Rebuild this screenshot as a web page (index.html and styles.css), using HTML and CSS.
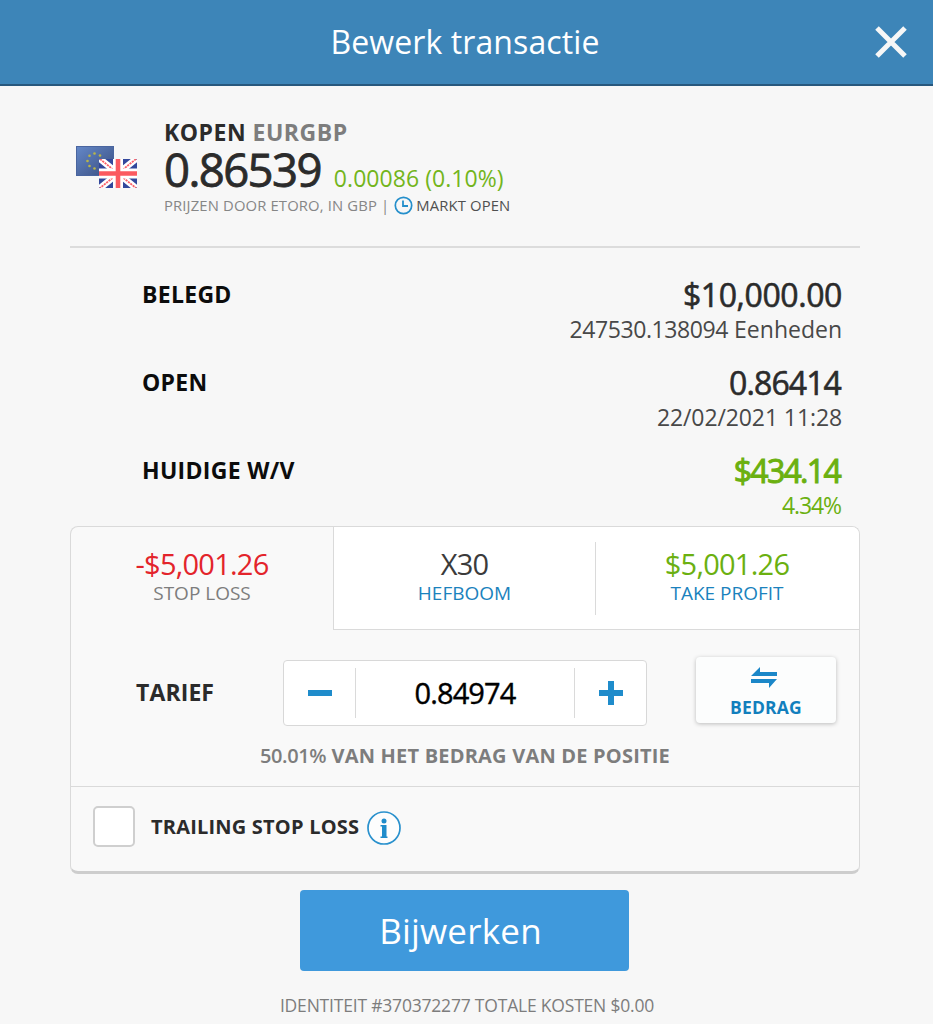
FILE: index.html
```html
<!DOCTYPE html>
<html lang="nl">
<head>
    <meta charset="UTF-8">
    <meta name="viewport" content="width=device-width, initial-scale=1.0">
    <title>Bewerk transactie</title>
    <link rel="stylesheet" href="styles.css">
</head>
<body>
    <header class="header">
        <h1 class="header-title">Bewerk transactie</h1>
        <button class="close-btn" aria-label="Sluiten">
            <svg width="34" height="34" viewBox="0 0 34 34"><path d="M3 3L31 31M31 3L3 31" stroke="#f7f7f7" stroke-width="5"/></svg>
        </button>
    </header>

    <main class="content">
        <section class="quote">
            <svg class="flags" width="62" height="43" viewBox="0 0 62 43">
                <defs>
                    <linearGradient id="eu" x1="0" y1="0" x2="1" y2="1">
                        <stop offset="0" stop-color="#6488c8"/>
                        <stop offset="1" stop-color="#3a4e80"/>
                    </linearGradient>
                </defs>
                <rect x="0.5" y="0.5" width="37" height="29" fill="url(#eu)" stroke="#4a659f"/>
                <g fill="#b9b548">
                    <circle cx="18.5" cy="7.5" r="1.3"/><circle cx="24" cy="9.5" r="1.3"/><circle cx="13.5" cy="9.7" r="1.3"/>
                    <circle cx="11.5" cy="15" r="1.3"/><circle cx="13.5" cy="20" r="1.3"/><circle cx="18.5" cy="22.5" r="1.3"/>
                </g>
                <!-- Union Jack -->
                <svg x="23" y="13" width="38" height="29" viewBox="0 0 38 29">
                    <rect width="38" height="29" fill="#33489c"/>
                    <path d="M1 0L37 29M37 0L1 29" stroke="#fff" stroke-width="6.5"/>
                    <path d="M1 0L37 29M37 0L1 29" stroke="#fb6068" stroke-width="1.8" stroke-dasharray="2.2 0.8"/>
                    <path d="M19 0V29M0 14.5H38" stroke="#fff" stroke-width="10"/>
                    <path d="M19 0V29M0 14.5H38" stroke="#fb5a60" stroke-width="4.6"/>
                </svg>
            </svg>
            <div class="quote-info">
                <div class="quote-name">KOPEN <span>EURGBP</span></div>
                <div class="quote-price">
                    <span class="price">0.86539</span>
                    <span class="change">0.00086 (0.10%)</span>
                </div>
                <div class="quote-note">
                    <span>PRIJZEN DOOR ETORO, IN GBP |</span>
                    <svg width="19" height="19" viewBox="0 0 19 19" fill="none" stroke="#258fcb"><circle cx="9.5" cy="9.5" r="8.2" stroke-width="1.7"/><path d="M9 4.5V10H14" stroke-width="1.8"/></svg>
                    <span class="market">MARKT OPEN</span>
                </div>
            </div>
        </section>

        <section class="details">
            <div class="row">
                <div class="row-label">BELEGD</div>
                <div class="row-data">
                    <div class="row-value">$10,000.00</div>
                    <div class="row-sub"><span class="units">247530.138094</span> Eenheden</div>
                </div>
            </div>
            <div class="row">
                <div class="row-label">OPEN</div>
                <div class="row-data">
                    <div class="row-value rate">0.86414</div>
                    <div class="row-sub date">22/02/2021 11:28</div>
                </div>
            </div>
            <div class="row">
                <div class="row-label">HUIDIGE W/V</div>
                <div class="row-data profit">
                    <div class="row-value">$434.14</div>
                    <div class="row-sub">4.34%</div>
                </div>
            </div>
        </section>

        <section class="card">
            <div class="tabs">
                <div class="tab active">
                    <div class="tab-value red">-$5,001.26</div>
                    <div class="tab-name">STOP LOSS</div>
                </div>
                <div class="tab">
                    <div class="tab-value">X30</div>
                    <div class="tab-name">HEFBOOM</div>
                </div>
                <div class="tab">
                    <div class="tab-value green">$5,001.26</div>
                    <div class="tab-name">TAKE PROFIT</div>
                </div>
            </div>
            <div class="rate-row">
                <div class="rate-label">TARIEF</div>
                <div class="stepper">
                    <button class="step-btn" aria-label="Min"><svg width="24" height="24" viewBox="0 0 24 24"><path d="M0 12H24" stroke="#1f8ccb" stroke-width="6"/></svg></button>
                    <div class="step-value">0.84974</div>
                    <button class="step-btn" aria-label="Plus"><svg width="24" height="24" viewBox="0 0 24 24"><path d="M0 12H24M12 0V24" stroke="#1f8ccb" stroke-width="6"/></svg></button>
                </div>
                <button class="amount-btn">
                    <svg width="26" height="21" viewBox="0 0 26 21" fill="#1b87c8"><path d="M0 9L9 0V5H26V9Z"/><path d="M26 12L18 21V16H0V12Z"/></svg>
                    <span>BEDRAG</span>
                </button>
            </div>
            <div class="rate-note"><span>50.01%</span> VAN HET BEDRAG VAN DE POSITIE</div>
            <div class="trailing">
                <div class="checkbox"></div>
                <div class="trailing-label">TRAILING STOP LOSS</div>
                <svg width="34" height="34" viewBox="0 0 34 34"><circle cx="17" cy="17" r="16" fill="#fdfdfd" stroke="#2a91cd" stroke-width="1.7"/><circle cx="17" cy="10" r="2.5" fill="#1f8ccb"/><path d="M13.5 14H19.5V25.5H20.5V27H13.5V25.5H15V15.5H13.5Z" fill="#1f8ccb"/></svg>
            </div>
        </section>

        <button class="submit-btn">Bijwerken</button>
        <footer class="footer">IDENTITEIT #370372277 TOTALE KOSTEN $0.00</footer>
    </main>
</body>
</html>
```
FILE: styles.css
```css
:root {
    --blue: #1b82bd;
    --green: #6bb010;
    --dark: #2b2b2b;
    --grey: #7d7d7d;
    --line: #dadada;
}

* {
    box-sizing: border-box;
}

body {
    margin: 0;
    background: #f7f7f7;
    font-family: "Open Sans", "Noto Sans", sans-serif;
    color: var(--dark);
    overflow: hidden;
}

button {
    margin: 0;
    padding: 0;
    border: none;
    background: none;
    font-family: inherit;
    cursor: pointer;
}

svg {
    display: block;
    flex-shrink: 0;
}

.header {
    display: grid;
    grid-template-columns: 60px 1fr 60px;
    align-items: center;
    height: 86px;
    padding: 0 25px 1px 22px;
    background: #3d85b8;
    border-bottom: 2px solid #28587d;
}

.header-title {
    grid-column: 2;
    margin: 0;
    font-size: 32px;
    font-weight: 400;
    line-height: 44px;
    letter-spacing: 0.1px;
    text-align: center;
    color: #fff;
}

.close-btn {
    justify-self: end;
}

.content {
    width: 790px;
    margin: 0 auto 0 70px;
}

/* Koers */
.quote {
    display: flex;
    height: 162px;
    padding: 31px 0 0 6px;
    border-bottom: 2px solid #dcdcdc;
}

.flags {
    margin: 29px 26px 0 0;
}

.quote-name {
    font-size: 23px;
    font-weight: 700;
    line-height: 30px;
    letter-spacing: 0.5px;
}

.quote-name span {
    color: var(--grey);
}

.quote-price {
    display: flex;
    align-items: baseline;
    gap: 13px;
    height: 46px;
    line-height: 44px;
}

.price {
    font-size: 45.5px;
    letter-spacing: -1.6px;
    -webkit-text-stroke: 0.8px var(--dark);
}

.change {
    font-size: 23px;
    letter-spacing: 0.05px;
    color: #73b51c;
}

.quote-note {
    display: flex;
    align-items: center;
    height: 22px;
    margin-top: 1px;
    gap: 5px;
    font-size: 14.8px;
    letter-spacing: 0.15px;
    color: #868686;
}

.market {
    margin-left: -2px;
    color: #505050;
}

/* Gegevens van de positie */
.details {
    display: flex;
    flex-direction: column;
    gap: 20px;
    padding: 28px 18px 6px 70px;
}

.row {
    display: flex;
    justify-content: space-between;
}

.row-label {
    padding-left: 2px;
    font-size: 23px;
    font-weight: 700;
    line-height: 36px;
    letter-spacing: 0.3px;
    color: #0c0c0c;
}

.row-data {
    text-align: right;
}

.row-value {
    font-size: 32px;
    line-height: 37px;
    letter-spacing: -0.4px;
    -webkit-text-stroke: 0.6px currentColor;
}

.row-value.rate {
    padding-right: 1px;
    letter-spacing: -0.9px;
}

.row-sub {
    margin-top: 1px;
    font-size: 23px;
    line-height: 30px;
    color: #484848;
}

.date {
    letter-spacing: -0.1px;
}

.units {
    letter-spacing: -0.4px;
}

.profit .row-value {
    padding-right: 2px;
    letter-spacing: -1.7px;
    -webkit-text-stroke-width: 1px;
    color: var(--green);
}

.profit .row-sub {
    padding-right: 1px;
    letter-spacing: -1.1px;
    color: var(--green);
}

/* Kaart met tabs */
.card {
    height: 348px;
    background: #f9f9f9;
    border: 1px solid var(--line);
    border-bottom: 3px solid #cdcdcd;
    border-radius: 8px;
    overflow: hidden;
}

.tabs {
    display: grid;
    grid-template-columns: 262px 262px 264px;
    height: 103px;
}

.tab {
    display: flex;
    flex-direction: column;
    align-items: center;
    padding-top: 18px;
    background: #fff;
    border-bottom: 1px solid var(--line);
    color: #3b3b3b;
}

.tab + .tab {
    border-left: 1px solid var(--line);
}

.tab + .tab + .tab {
    border-left: none;
    background: linear-gradient(var(--line), var(--line)) 0 15px / 1px 73px no-repeat #fff;
}

.tab.active {
    background: none;
    border-bottom: none;
}

.tab-value {
    font-size: 29px;
    line-height: 37px;
    letter-spacing: -0.75px;
}

.red {
    color: #e3242b;
}

.green {
    color: var(--green);
}

.tab-name {
    font-size: 19px;
    line-height: 22px;
    color: var(--blue);
}

.active .tab-name {
    color: var(--grey);
}

.rate-row {
    display: flex;
    align-items: flex-start;
    padding: 27px 23px 0 65px;
}

.rate-label {
    width: 147px;
    padding-top: 17px;
    font-size: 23px;
    font-weight: 700;
    line-height: 36px;
    letter-spacing: 0.1px;
}

.stepper {
    display: flex;
    align-items: center;
    width: 364px;
    height: 66px;
    margin-top: 3px;
    background: #fff;
    border: 1px solid #d8d8d8;
    border-radius: 4px;
}

.step-btn {
    display: flex;
    align-items: center;
    justify-content: center;
    width: 71px;
    height: 50px;
}

.step-value {
    flex: 1;
    border: solid var(--line);
    border-width: 0 1px;
    font-size: 29px;
    line-height: 50px;
    letter-spacing: -0.9px;
    text-align: center;
    color: #000;
    -webkit-text-stroke: 0.4px #000;
}

.amount-btn {
    display: flex;
    flex-direction: column;
    align-items: center;
    width: 140px;
    height: 66px;
    margin-left: auto;
    padding-top: 10px;
    background: #fcfdfd;
    border-radius: 4px;
    box-shadow: 0 1px 4px rgba(0, 0, 0, 0.25);
}

.amount-btn svg {
    margin-right: 4px;
}

.amount-btn span {
    margin-top: 6px;
    font-size: 17.5px;
    font-weight: 700;
    line-height: 26px;
    letter-spacing: 0.2px;
    color: #127fbd;
}

.rate-note {
    height: 61px;
    padding-top: 16px;
    font-size: 20px;
    font-weight: 700;
    line-height: 28px;
    letter-spacing: 0.2px;
    text-align: center;
    color: var(--grey);
    border-bottom: 1px solid var(--line);
}

.rate-note span {
    font-weight: 600;
    letter-spacing: -0.4px;
}

.trailing {
    display: flex;
    align-items: center;
    padding: 19px 22px 0;
}

.trailing svg {
    margin-top: 2px;
}

.checkbox {
    width: 42px;
    height: 41px;
    background: #fff;
    border: 2px solid #cfcfcf;
    border-radius: 5px;
}

.trailing-label {
    width: 209px;
    margin: 0 7px 0 16px;
    font-size: 20px;
    font-weight: 700;
    letter-spacing: 0.2px;
    white-space: nowrap;
}

.submit-btn {
    display: block;
    width: 329px;
    height: 81px;
    margin: 16px auto 0 230px;
    background: #3f99dc;
    border-radius: 4px;
    font-size: 35px;
    letter-spacing: 0.2px;
    padding-top: 0;
    padding-right: 8px;
    color: #fff;
}

.footer {
    margin-top: 20px;
    padding-left: 4px;
    font-size: 17.5px;
    line-height: 28px;
    letter-spacing: -0.2px;
    text-align: center;
    color: var(--grey);
}
```
